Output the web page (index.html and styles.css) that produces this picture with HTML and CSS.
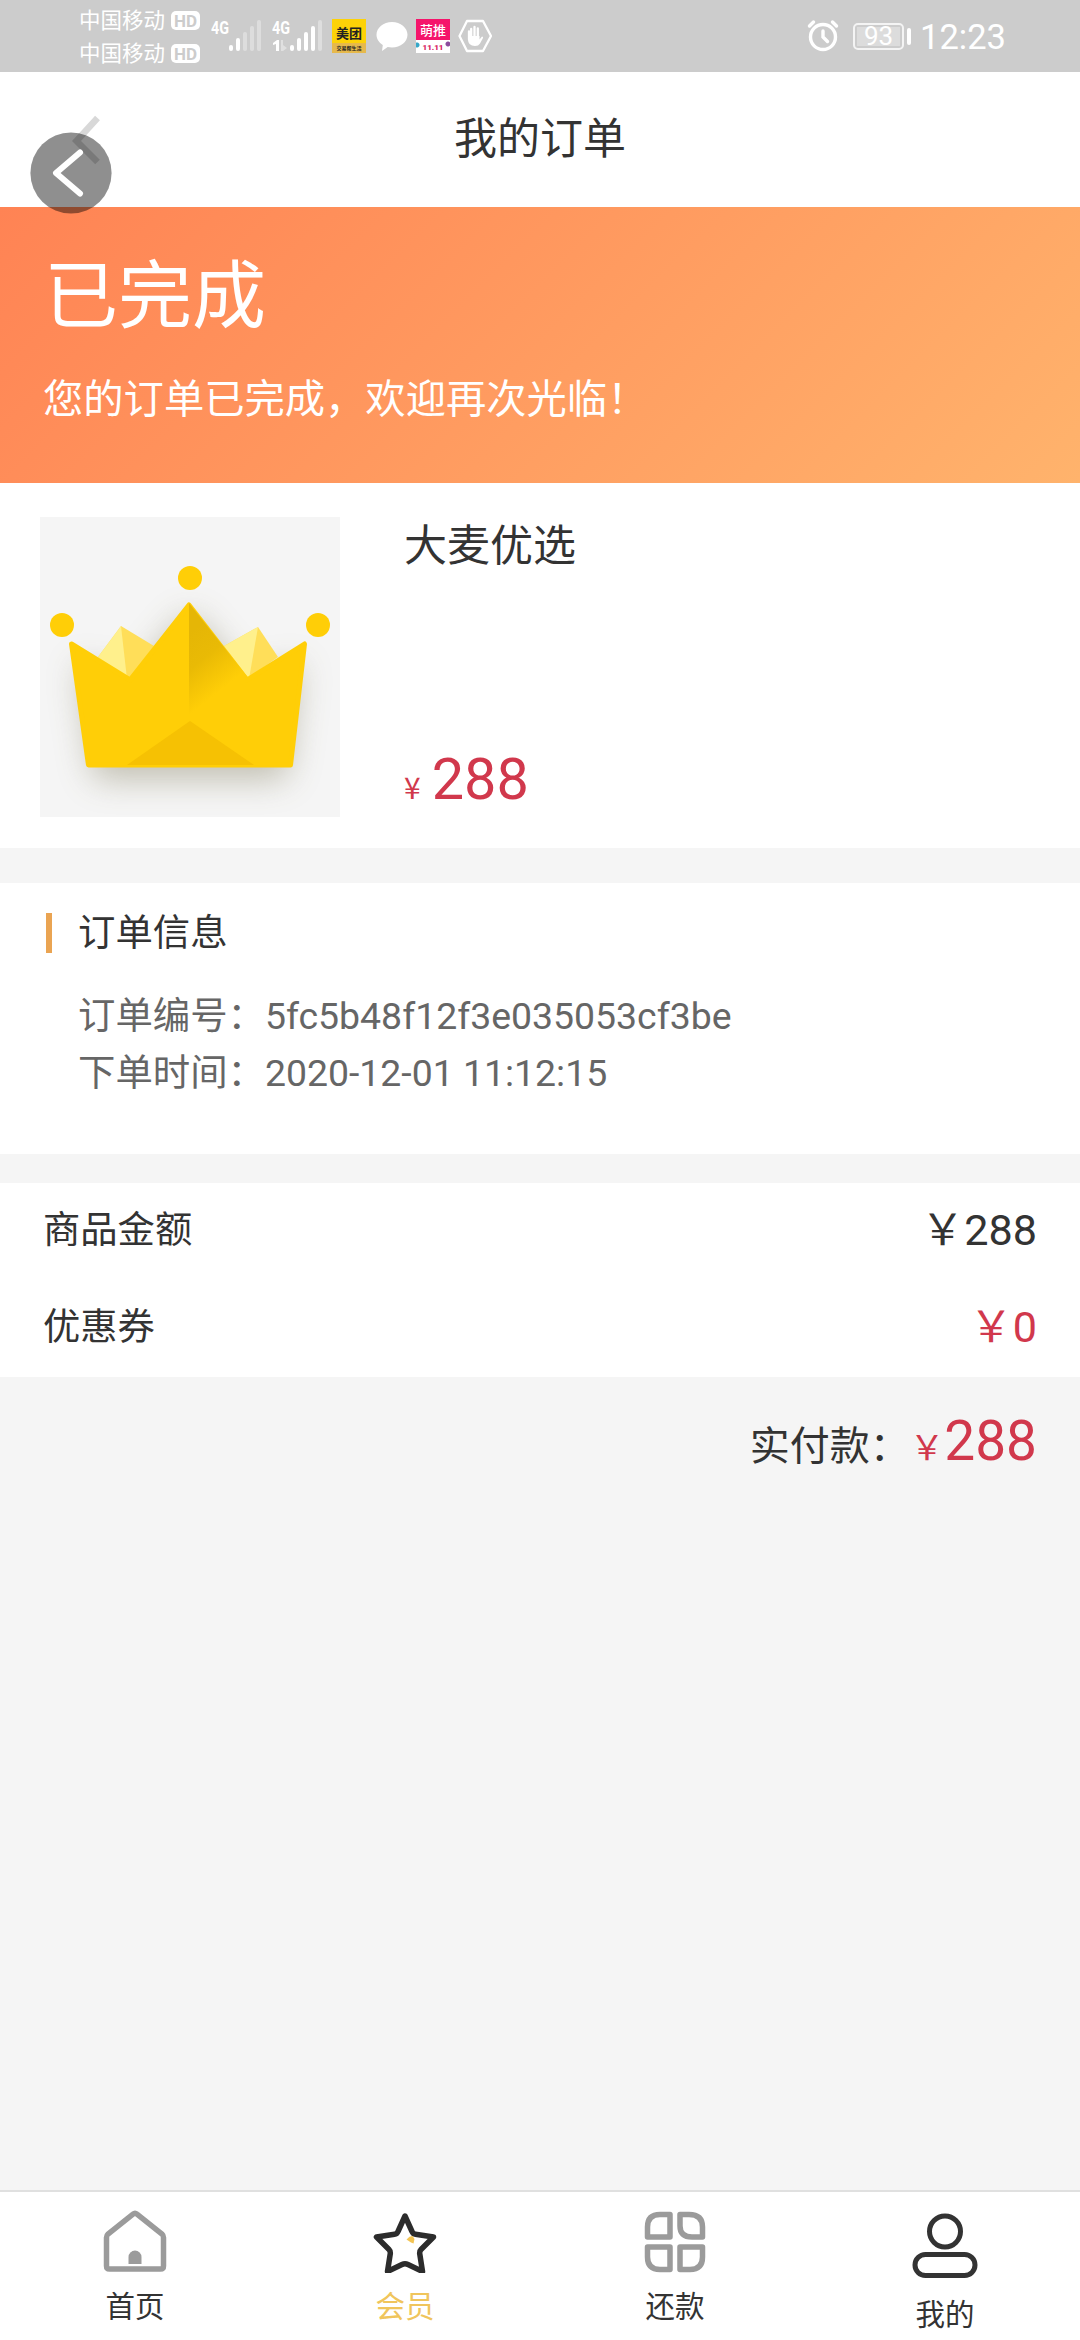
FILE: index.html
```html
<!DOCTYPE html>
<html lang="zh-CN">
<head>
<meta charset="utf-8">
<title>我的订单</title>
<link rel="stylesheet" href="styles.css">
</head>
<body>
<div class="screen">
  <div class="status">
    <div class="carriers">
      <div class="carrier">中国移动<span class="hd">HD</span></div>
      <div class="carrier">中国移动<span class="hd">HD</span></div>
    </div>
    <svg class="signal" width="52" height="40" viewBox="0 0 52 40" fill="#fff">
      <text class="net" x="0" y="18" textLength="18" lengthAdjust="spacingAndGlyphs">4G</text>
      <rect x="18" y="29" width="4" height="6" rx="2"/><rect x="25" y="22" width="4" height="13" rx="2"/>
      <g opacity=".35"><rect x="32" y="16" width="4" height="19" rx="2"/><rect x="39" y="10" width="4" height="25" rx="2"/><rect x="46" y="4" width="4" height="31" rx="2"/></g>
    </svg>
    <svg class="signal second" width="52" height="40" viewBox="0 0 52 40" fill="#fff">
      <text class="net" x="0" y="18" textLength="18" lengthAdjust="spacingAndGlyphs">4G</text>
      <path d="M1 27l4-3h2v11H4v-7l-3 1z"/><path opacity=".4" d="M9 24h2v5l4 3-4 3H9z"/>
      <rect x="18" y="29" width="4" height="6" rx="2"/><rect x="25" y="22" width="4" height="13" rx="2"/><rect x="32" y="16" width="4" height="19" rx="2"/><rect x="39" y="10" width="4" height="25" rx="2"/>
      <rect opacity=".35" x="46" y="4" width="4" height="31" rx="2"/>
    </svg>
    <div class="app meituan"><b>美团</b><i>交易帮生活</i></div>
    <svg class="bubble" width="32" height="32" viewBox="0 0 32 32"><path fill="#fff" d="M16 2c8.600 0 15.500 5.700 15.500 12.800S24.600 27.500 16 27.500c-1.500 0-3-.2-4.300-.5L6 31l.8-6C3 22.500.5 19 .5 14.800.5 7.700 7.400 2 16 2z"/></svg>
    <div class="app promo"><b>萌推</b><i>11.11</i></div>
    <svg class="hand" width="34" height="34" viewBox="0 0 34 34"><path d="M9 2h16l8 15-8 15H9L1.500 17z" fill="none" stroke="#fff" stroke-width="2.300" stroke-linejoin="round"/><path d="M13.200 10v9M16.500 8v11M19.800 9.500V19M11 12.500v8" fill="none" stroke="#fff" stroke-width="2.300" stroke-linecap="round"/><path d="M10 17h11.500v3.500l2.500-3q1.500 0 1 1.500l-3 5.500q-1.500 2.500-5 2.500-7 0-7-6.500z" fill="#fff"/></svg>
    <svg class="alarm" width="32" height="34" viewBox="0 0 32 34" fill="none" stroke="#fff" stroke-linecap="round"><circle cx="16" cy="19" r="12.500" stroke-width="3.400"/><path d="M16 13v6l4.500 4.500" stroke-width="3.400"/><path d="M2.500 8l4-4M29.500 8l-4-4" stroke-width="3.400"/></svg>
    <div class="battery"><span>93</span></div>
    <div class="cap"></div>
    <div class="clock">12:23</div>
  </div>

  <header class="header">
    <svg class="nav-back" width="30" height="52" viewBox="0 0 30 52"><path d="M26.500 4L5.500 27l21 21" fill="none" stroke="#d8d8d8" stroke-width="6.500"/></svg>
    <h1>我的订单</h1>
    <svg class="float-back" width="82" height="82" viewBox="0 0 82 82"><circle cx="41" cy="41" r="40.600" fill="#000" fill-opacity=".44"/><path d="M50 20.500L26 41l24 20.500" fill="none" stroke="#fff" stroke-width="6" stroke-linecap="round" stroke-linejoin="round"/></svg>
  </header>

  <section class="banner">
    <h2>已完成</h2>
    <p>您的订单已完成，欢迎再次光临！</p>
  </section>

  <section class="product">
    <svg class="thumb" width="300" height="300" viewBox="0 0 300 300">
      <defs>
        <linearGradient id="fold" gradientUnits="userSpaceOnUse" x1="142" y1="122" x2="182" y2="172"><stop offset="0" stop-color="#e5b606"/><stop offset=".45" stop-color="#e9ba05"/><stop offset="1" stop-color="#ffce07"/></linearGradient>
        <filter id="soft" x="-30%" y="-30%" width="160%" height="160%"><feGaussianBlur stdDeviation="17"/></filter>
      </defs>
      <rect width="300" height="300" fill="#f5f5f5"/>
      <path d="M38 145l52 20 60-70 58 70 52-20-14 117H54z" fill="#6b6540" opacity=".38" filter="url(#soft)"/>
      <path d="M58 140l23-31 33 20-25 33z" fill="#ffde59"/><path d="M58 140l23-31 6 53z" fill="#fff08c"/>
      <path d="M184 129l34-19 20 30-31 22z" fill="#ffde59"/><path d="M184 129l34-19-9 52z" fill="#fff08c"/>
      <path d="M31.500 127l58.500 36 59-75 58 75 57.500-36-14 121H48.500z" fill="#ffce07" stroke="#ffce07" stroke-width="5" stroke-linejoin="round"/>
      <path d="M149 86l60 76-30 24-30 18z" fill="url(#fold)"/>
      <path d="M150 204l64 44H87z" fill="#f6c103"/>
      <g fill="#ffce07"><circle cx="150" cy="61" r="12"/><circle cx="22" cy="108" r="12"/><circle cx="278" cy="108" r="12"/></g>
    </svg>
    <div class="detail">
      <h3>大麦优选</h3>
      <div class="price"><span>¥</span>288</div>
    </div>
  </section>

  <section class="info">
    <h3>订单信息</h3>
    <p>订单编号：5fc5b48f12f3e035053cf3be</p>
    <p>下单时间：2020-12-01 11:12:15</p>
  </section>

  <section class="amounts">
    <div class="row"><span>商品金额</span><b>￥288</b></div>
    <div class="row"><span>优惠券</span><b class="red">￥0</b></div>
  </section>
  <div class="total"><span>实付款：</span><small>￥</small><b>288</b></div>

  <nav class="tabs">
    <div class="tab">
      <svg width="66" height="64" viewBox="0 0 66 64"><path d="M31 5.200Q33 3.500 35 5.200L60 25Q61.500 26.300 61.500 28.500V57Q61.500 60 58.500 60h-51Q4.500 60 4.500 57V28.500Q4.500 26.300 6 25z" fill="none" stroke="#9b9b9b" stroke-width="5.500"/><path d="M26.500 55V48a6.500 6.500 0 0 1 13 0v7z" fill="#9b9b9b"/></svg>
      <span>首页</span>
    </div>
    <div class="tab active">
      <svg width="66" height="64" viewBox="0 0 66 64"><path d="M33 7L40 22.500Q41 25 43.500 25.300L61.500 28 49 40.500Q47.500 42 47.700 44.500L50.500 62.500 36 55.500Q33 54 30 55.500L15.500 62.500 18.300 44.500Q18.500 42 17 40.500L4.500 28 22.500 25.300Q25 25 26 22.500z" fill="none" stroke="#2c2c2c" stroke-width="5.500" stroke-linejoin="round"/><path d="M34.500 30.500l3-2.800 3-.7 2 3-1 4.500-2.500-1z" fill="#f3c453"/></svg>
      <span>会员</span>
    </div>
    <div class="tab">
      <svg width="66" height="64" viewBox="0 0 66 64" fill="none" stroke="#9b9b9b" stroke-width="5.500" stroke-linejoin="round"><path d="M28 5.500V28H5.500V18Q5.500 5.500 18 5.500zM38 5.500h9Q60.500 5.500 60.500 18V28H50Q38 28 38 17zM5.500 38H28v22.500H18Q5.500 60.500 5.500 48zM38 38H60.500V48Q60.500 60.500 48 60.500H38z"/></svg>
      <span>还款</span>
    </div>
    <div class="tab mine">
      <svg width="66" height="66" viewBox="0 0 66 66" fill="none" stroke="#333" stroke-width="5"><circle cx="33" cy="18.500" r="15.500"/><rect x="3" y="41.500" width="60" height="21" rx="10.500"/></svg>
      <span>我的</span>
    </div>
  </nav>
</div>
</body>
</html>
```

FILE: styles.css
```css
* { box-sizing: border-box; margin: 0; padding: 0; }
body { width: 1080px; font-family: Roboto, "Noto Sans CJK SC", sans-serif; color: #333; background: #f5f5f5; }
h1, h2, h3, b { font-weight: 400; }
i { font-style: normal; }
svg { display: block; flex: none; }
.screen { display: flex; flex-direction: column; width: 1080px; height: 2340px; overflow: hidden; }

.status { display: flex; height: 72px; padding-left: 79px; background: #ccc; color: #fff; }
.carriers { width: 130px; padding-top: 4px; }
.carrier { display: flex; align-items: center; height: 33px; font-size: 21.5px; line-height: 33px; white-space: nowrap; }
.hd { width: 29px; height: 19px; margin-left: 6px; border-radius: 5px; background: #fff; color: #ccc; font-size: 17px; font-weight: 700; line-height: 20px; text-align: center; }
.signal { margin-top: 16px; margin-left: 2px; }
.signal.second { margin-left: 9px; }
.net { font: 700 19px Roboto, sans-serif; }
.app { display: flex; flex-direction: column; align-items: center; width: 34px; height: 34px; margin-top: 19px; overflow: hidden; white-space: nowrap; }
.meituan { margin-left: 8px; background: linear-gradient(#fdd207 72%, #e6b94c 72%); color: #222; }
.meituan b { height: 25px; font-size: 13px; font-weight: 700; line-height: 29px; }
.meituan i { height: 9px; font-size: 5px; font-weight: 700; line-height: 8px; }
.bubble { margin: 20px 0 0 10px; }
.promo { margin-left: 8px; background: radial-gradient(circle at 1px 26px, #35a7c8 2px, transparent 3px), radial-gradient(circle at 32px 25px, #8c4b9c 2px, transparent 3px), linear-gradient(#f5146b 62%, #fff 62%); }
.promo b { height: 21px; font-size: 13px; font-weight: 500; line-height: 23px; }
.promo i { color: #d81b60; font-size: 8px; font-weight: 900; line-height: 15px; }
.hand { margin: 19px 0 0 8px; }
.alarm { margin: 18px 0 0 315px; }
.battery { width: 51px; height: 27px; margin: 23px 0 0 14px; padding: 2px; border: 2px solid #f4f4f4; border-radius: 5px; }
.battery span { display: block; height: 19px; background: #dcdcdc; font-size: 26px; line-height: 19px; text-align: center; }
.cap { width: 4px; height: 17px; margin: 28px 0 0 3px; border-radius: 2px; background: #fff; }
.clock { margin-left: 9px; font-size: 34.500px; line-height: 74px; }

.header { position: relative; display: flex; justify-content: center; height: 135px; background: #fff; }
.header h1 { font-size: 43px; line-height: 134px; }
.nav-back { position: absolute; left: 71px; top: 42px; }
.float-back { position: absolute; left: 29.500px; top: 59.500px; z-index: 1; }

.banner { height: 276px; padding: 34px 43px 0; background: linear-gradient(135deg, #ff8354, #ffb36c); color: #fff; }
.banner h2 { padding-left: 1px; font-size: 74px; line-height: 112px; }
.banner p { margin-top: 17px; font-size: 40.300px; line-height: 60px; }

.product { display: flex; height: 365px; padding: 34px 40px 31px; background: #fff; }
.detail { display: flex; flex-direction: column; justify-content: space-between; margin-left: 64px; }
.detail h3 { font-size: 43px; line-height: 58px; }
.price { display: flex; align-items: baseline; gap: 11px; color: #d1384c; font-size: 57.600px; line-height: 75px; }
.price span { font-family: "Noto Sans CJK SC", sans-serif; font-size: 30px; line-height: 36px; }

.info { height: 271px; margin-top: 35px; padding: 23px 0 0 46px; background: #fff; color: #666; font-size: 37.400px; }
.info h3 { display: flex; align-items: center; gap: 26px; margin-bottom: 28px; color: #333; font-size: 37.400px; line-height: 54px; }
.info h3::before { content: ""; width: 6px; height: 40px; background: #eaa452; }
.info p { padding-left: 32px; line-height: 57px; white-space: nowrap; }

.amounts { height: 194px; margin-top: 29px; padding: 0 43px; background: #fff; }
.row { display: flex; justify-content: space-between; height: 97px; font-size: 37.300px; line-height: 94px; }
.row b { font-size: 43.200px; line-height: 96px; }
.red { color: #d1384c; }
.total { display: flex; justify-content: flex-end; align-items: baseline; height: 130px; padding: 26px 43px 0; font-size: 40px; line-height: 76px; }
.total small, .total b { color: #d1384c; }
.total small { font-size: 34.500px; }
.total b { font-size: 55px; }

.tabs { display: grid; grid-template-columns: repeat(4, 1fr); height: 150px; margin-top: auto; border-top: 2px solid #e0e0e0; background: #fff; }
.tab { display: flex; flex-direction: column; align-items: center; padding-top: 17px; font-size: 29.500px; }
.tab span { margin-top: 14px; line-height: 40px; }
.active { color: #f0c55c; }
.mine { padding-top: 21px; }
.mine span { margin-top: 16px; }
```
